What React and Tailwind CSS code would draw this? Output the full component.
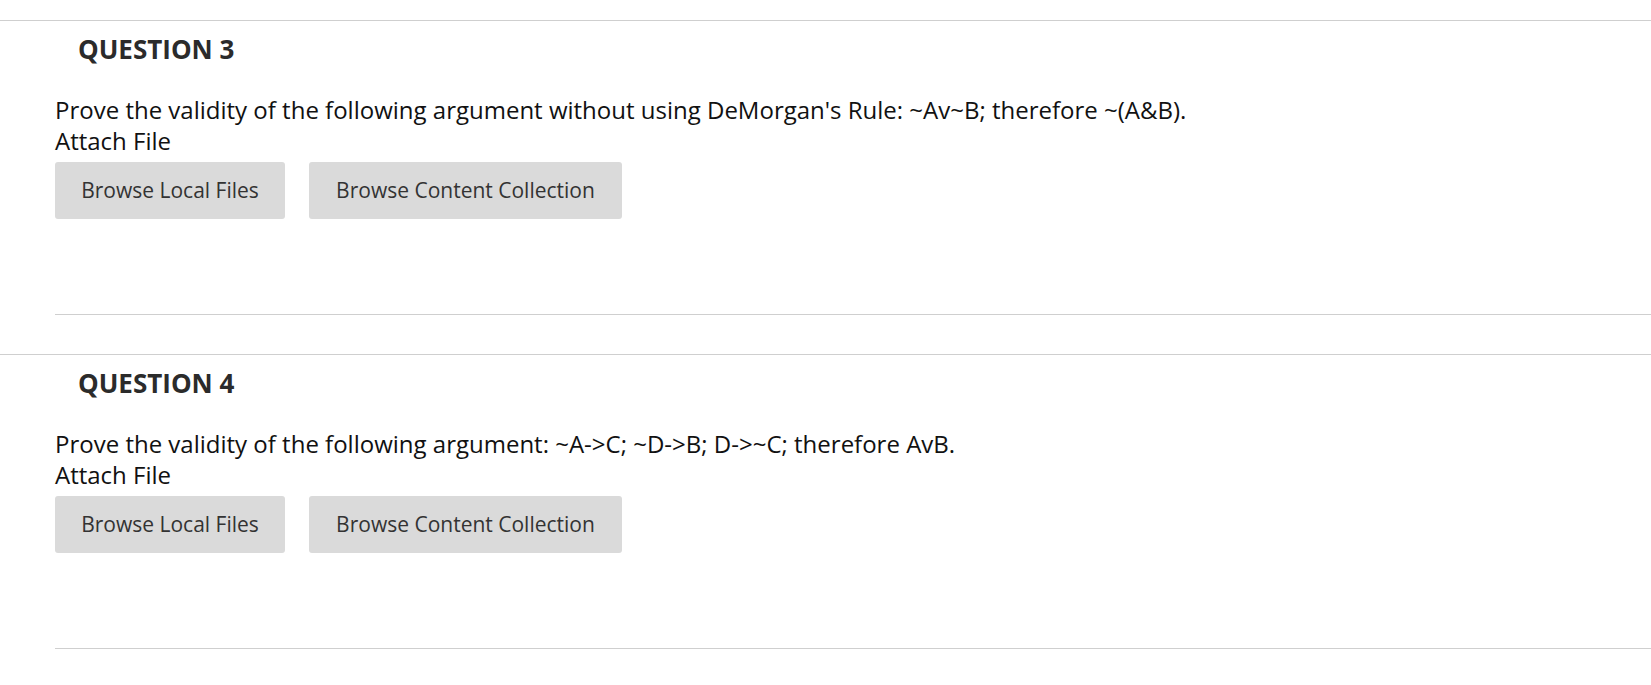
import React from 'react';

// Assignment questions — each with a prompt and file attach buttons
const questions = [
  {
    num: 3,
    text: "Prove the validity of the following argument without using DeMorgan's Rule: ~Av~B; therefore ~(A&B).",
  },
  {
    num: 4,
    text: 'Prove the validity of the following argument: ~A->C; ~D->B; D->~C; therefore AvB.',
  },
];

function Question({ num, text }) {
  return (
    <div className="border-t border-[#cfcfcf]">
      {/* Heading */}
      <h2 className="pt-[10px] pl-[78px] text-[26px] leading-[36px] font-bold text-[#2b2b2b]">
        QUESTION {num}
      </h2>

      {/* Prompt + attach */}
      <div className="pl-[55px] pt-[27px] text-[24px] leading-[31px] text-[#111]">
        <p>{text}</p>
        <p>Attach File</p>
        <div className="flex gap-[24px] mt-[6px]">
          <button className="h-[57px] w-[230px] rounded-[3px] bg-[#dadada] text-[21px] text-[#333]">
            Browse Local Files
          </button>
          <button className="h-[57px] w-[313px] rounded-[3px] bg-[#dadada] text-[21px] text-[#333]">
            Browse Content Collection
          </button>
        </div>
      </div>

      {/* Divider */}
      <div className="ml-[55px] mt-[95px] border-t border-[#cfcfcf]" />
    </div>
  );
}

export default function App() {
  return (
    <div
      className="min-h-screen bg-white pt-[20px]"
      style={{ fontFamily: '"Open Sans", "Noto Sans", sans-serif' }}
    >
      <div className="flex flex-col gap-[39px]">
        {questions.map(q => (
          <Question key={q.num} num={q.num} text={q.text} />
        ))}
      </div>
    </div>
  );
}
